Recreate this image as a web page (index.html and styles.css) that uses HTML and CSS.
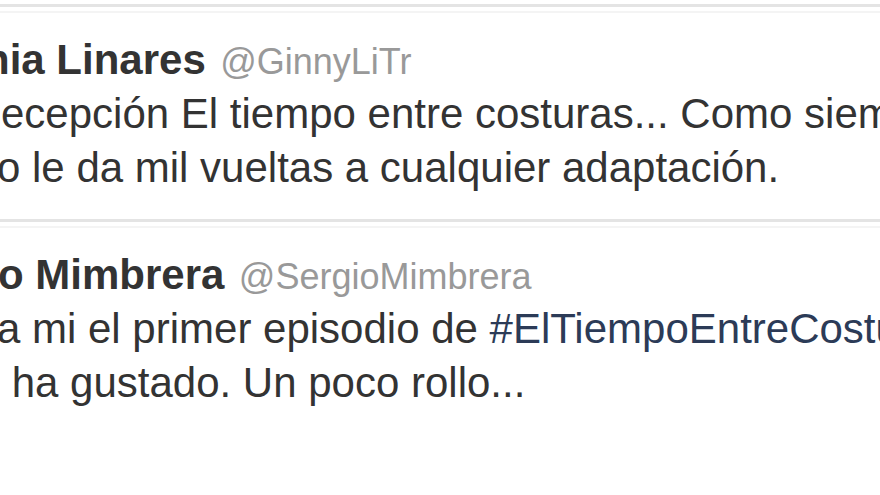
FILE: index.html
```html
<!DOCTYPE html>
<html lang="es">
<head>
    <meta charset="UTF-8">
    <meta name="viewport" content="width=device-width, initial-scale=1.0">
    <title>Tweets</title>
    <link rel="stylesheet" href="styles.css">
</head>
<body>
    <div class="stream">
        <div class="tweet">
            <div class="tweet-header">
                <strong class="fullname name-cut">nia Linares</strong>
                <span class="username">@GinnyLiTr</span>
            </div>
            <p class="tweet-text">
                <span class="line first-line">ecepción El tiempo entre costuras... Como siempre, el libro</span>
                <span class="line line-cut">o le da mil vueltas a cualquier adaptación.</span>
            </p>
        </div>

        <div class="tweet">
            <div class="tweet-header">
                <strong class="fullname name-cut-short">o Mimbrera</strong>
                <span class="username">@SergioMimbrera</span>
            </div>
            <p class="tweet-text">
                <span class="line line-cut">a mi el primer episodio de <a class="hashtag" href="#">#ElTiempoEntreCosturas</a></span>
                <span class="line"> &nbsp;ha gustado. Un poco rollo...</span>
            </p>
        </div>
    </div>
</body>
</html>
```

FILE: styles.css
```css
html, body {
    margin: 0;
    padding: 0;
    background: #fff;
    overflow: hidden;
}
body {
    width: 880px;
    height: 495px;
    font-family: "Liberation Sans", Arial, sans-serif;
    color: #333;
}
.stream {
    padding-top: 4px;
}
.tweet {
    border-top: 3px solid #e4e4e4;
    padding: 26px 0 24px 0;
    background: linear-gradient(to bottom, transparent 4px, #f4f4f4 4px, #f4f4f4 6px, transparent 6px);
    white-space: nowrap;
}
.tweet-header {
    line-height: 54px;
    height: 54px;
}
.fullname {
    font-size: 42px;
    font-weight: bold;
    color: #333;
}
.username {
    font-size: 36px;
    color: #999;
    margin-left: 10px;
}
.tweet-text {
    margin: 0;
    font-size: 42px;
    line-height: 54px;
}
.line {
    display: block;
}
.first-line {
    margin-left: 1px;
}
.line-cut {
    margin-left: -3px;
}
.name-cut {
    margin-left: -16px;
}
.name-cut-short {
    margin-left: -2px;
}
.hashtag {
    color: #2c3b57;
    text-decoration: none;
}
```
